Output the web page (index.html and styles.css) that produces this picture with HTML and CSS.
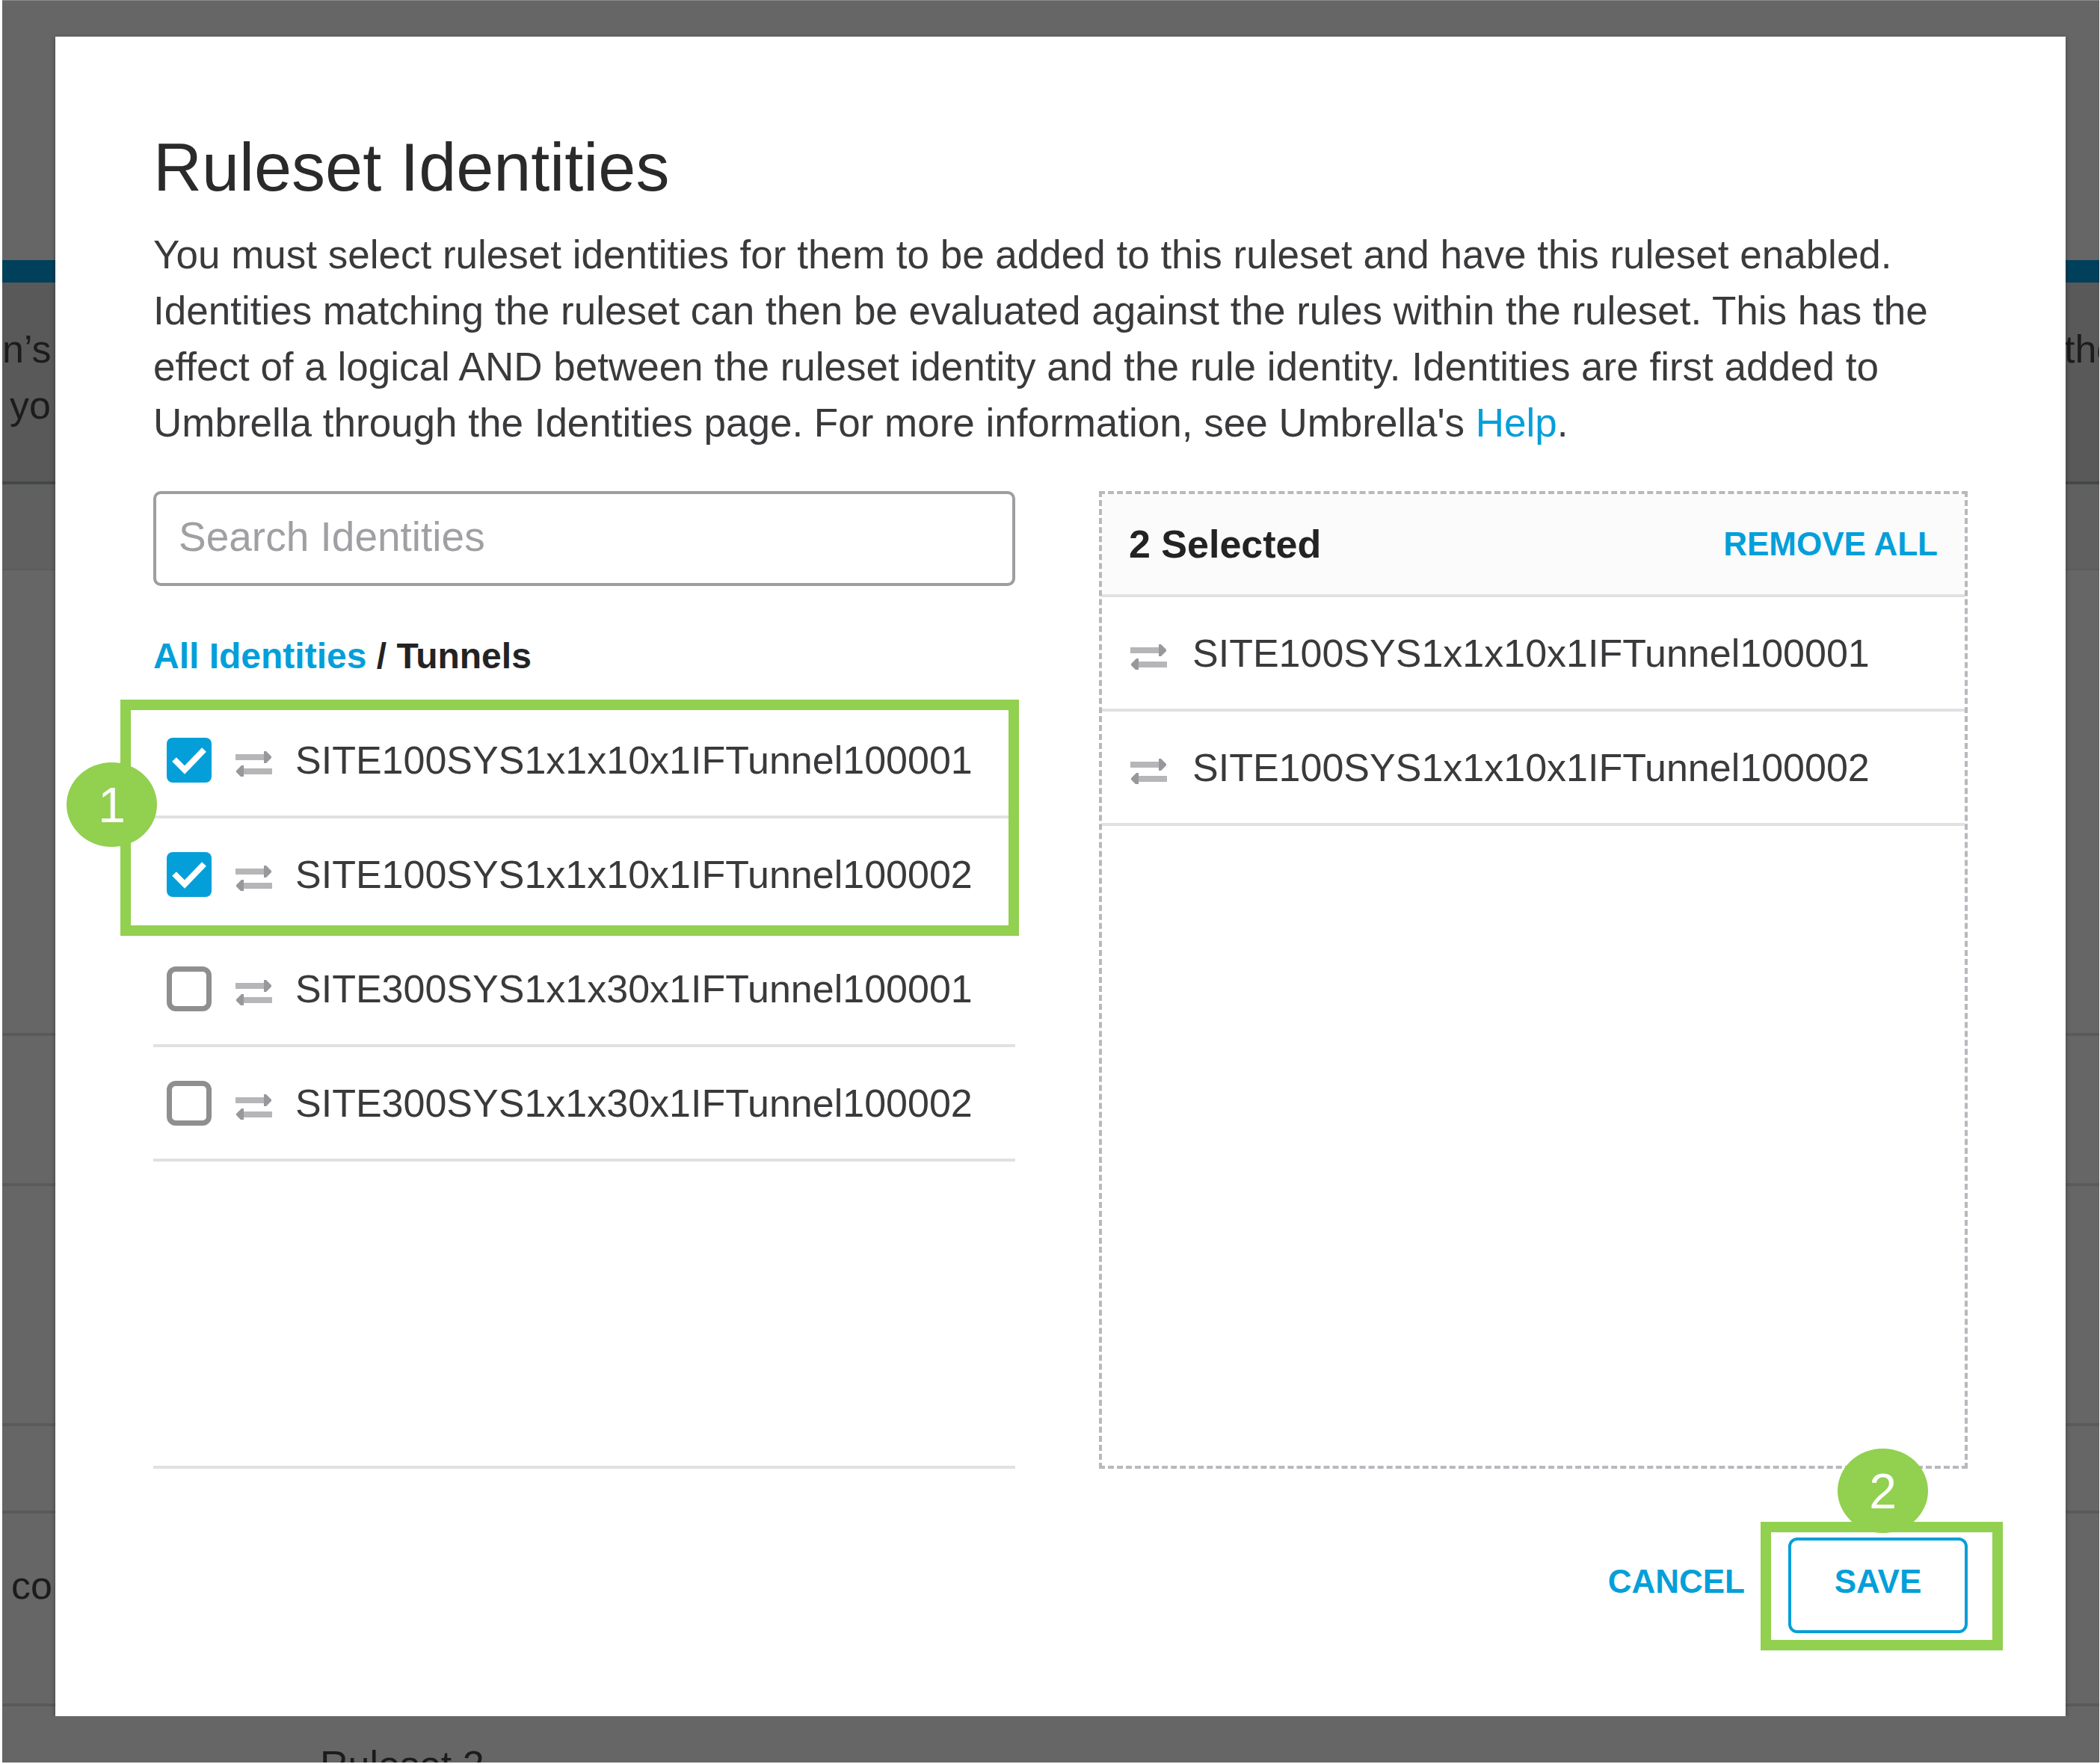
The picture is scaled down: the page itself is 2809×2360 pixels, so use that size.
FILE: index.html
```html
<!DOCTYPE html>
<html lang="en">
<head>
<meta charset="utf-8">
<title>Ruleset Identities</title>
<link rel="stylesheet" href="styles.css">
</head>
<body>
<svg class="sprite" aria-hidden="true">
  <symbol id="tunnel" viewBox="0 0 50 44">
    <path fill="#b6b6b8" d="M1 14h39v8H1zM10 33h40v8H10z"/>
    <path fill="#98989c" d="M39 10h3l7 7v2l-7 7h-3zM12 29H9l-7 7v2l7 7h3z"/>
  </symbol>
</svg>

<div class="page">
  <div class="page-top"></div>
  <div class="notice">
    <div class="notice-line"><span>n’s</span><span class="notice-end">the</span></div>
    <div class="notice-line notice-indent">yo</div>
  </div>
  <div class="strip"></div>
  <div class="band band-tall"></div>
  <div class="band band-mid"></div>
  <div class="band band-open"></div>
  <div class="band band-short"></div>
  <div class="band band-text">co</div>
  <div class="band-last">Ruleset 2</div>
</div>

<main class="modal" role="dialog" aria-labelledby="title">
  <h1 id="title" class="title">Ruleset Identities</h1>
  <p class="intro">You must select ruleset identities for them to be added to this ruleset and have this ruleset enabled. Identities matching the ruleset can then be evaluated against the rules within the ruleset. This has the effect of a logical AND between the ruleset identity and the rule identity. Identities are first added to Umbrella through the Identities page. For more information, see Umbrella's <a class="link" href="#help">Help</a>.</p>

  <div class="columns">
    <section class="picker">
      <input class="search" type="text" placeholder="Search Identities" aria-label="Search Identities">
      <nav class="crumbs"><a class="link" href="#all">All Identities</a> / Tunnels</nav>
      <div class="list">
        <div class="marked">
          <label class="row"><input class="check" type="checkbox" checked><svg class="icon"><use href="#tunnel"/></svg><span>SITE100SYS1x1x10x1IFTunnel100001</span></label>
          <label class="row"><input class="check" type="checkbox" checked><svg class="icon"><use href="#tunnel"/></svg><span>SITE100SYS1x1x10x1IFTunnel100002</span></label>
          <div class="frame frame-list"></div>
          <div class="badge badge-list">1</div>
        </div>
        <label class="row"><input class="check" type="checkbox"><svg class="icon"><use href="#tunnel"/></svg><span>SITE300SYS1x1x30x1IFTunnel100001</span></label>
        <label class="row"><input class="check" type="checkbox"><svg class="icon"><use href="#tunnel"/></svg><span>SITE300SYS1x1x30x1IFTunnel100002</span></label>
      </div>
    </section>

    <section class="selected">
      <header class="selected-head">
        <h2 class="count">2 Selected</h2>
        <button class="action" type="button">REMOVE ALL</button>
      </header>
      <div class="row chosen"><svg class="icon"><use href="#tunnel"/></svg><span>SITE100SYS1x1x10x1IFTunnel100001</span></div>
      <div class="row chosen"><svg class="icon"><use href="#tunnel"/></svg><span>SITE100SYS1x1x10x1IFTunnel100002</span></div>
    </section>
  </div>

  <footer class="footer">
    <button class="action cancel" type="button">CANCEL</button>
    <div class="save-wrap">
      <button class="action save" type="button">SAVE</button>
      <div class="frame frame-save"></div>
      <div class="badge badge-save">2</div>
    </div>
  </footer>
</main>
</body>
</html>
```

FILE: styles.css
```css
:root {
  --blue: #049fd9;
  --green: #92d050;
  --rule: #e1e1e2;
  --ink: #3a3a3c;
}

* {
  box-sizing: border-box;
}

body {
  margin: 0;
  background: #fff;
  color: var(--ink);
  font-family: "Liberation Sans", Arial, sans-serif;
  font-size: 52px;
}

.sprite {
  position: absolute;
  width: 0;
  height: 0;
}

/* Dimmed page behind the dialog */
.page {
  position: absolute;
  inset: 0 1px 2px 3px;
  display: flex;
  flex-direction: column;
  overflow: hidden;
  border-top: 1px solid #8c8c8c;
  background: #666;
  color: #1c1c1c;
}

.page > * {
  flex-shrink: 0;
}

.page-top {
  height: 347px;
}

.notice {
  height: 300px;
  padding-top: 52px;
  border-top: 30px solid #00405a;
  border-bottom: 4px solid #444848;
  background: #595959;
  line-height: 75px;
}

.notice-line {
  display: flex;
  justify-content: space-between;
}

.notice-end {
  width: 47px;
}

.notice-indent {
  padding-left: 10px;
}

.strip {
  height: 115px;
  border-bottom: 2px solid #5c5c5c;
  background: #606060;
}

.band {
  border-bottom: 4px solid #5a5a5a;
}

.band-tall {
  height: 623px;
}

.band-mid {
  height: 201px;
}

.band-open {
  height: 321px;
}

.band-short {
  height: 117px;
}

.band-text {
  height: 258px;
  padding: 59px 12px;
  line-height: 75px;
}

.band-last {
  padding: 41px 425px;
  line-height: 75px;
  white-space: nowrap;
}

/* Dialog */
.modal {
  position: relative;
  margin: 49px 46px 0 74px;
  padding: 125px 131px 111px;
  background: #fff;
  box-shadow: 0 2px 6px rgba(0, 0, 0, 0.35);
}

.title {
  margin: 0 0 29px;
  color: #2a2a2b;
  font-size: 90px;
  font-weight: 400;
  line-height: 100px;
}

.intro {
  margin: 0 0 54px;
  font-size: 53px;
  line-height: 75px;
}

.link {
  color: var(--blue);
  text-decoration: none;
}

.columns {
  display: grid;
  grid-template-columns: 1153fr 1162fr;
  column-gap: 112px;
  min-height: 1308px;
}

.picker {
  display: flex;
  flex-direction: column;
}

.search {
  width: 100%;
  height: 127px;
  padding: 0 30px 6px;
  border: 4px solid #9e9ea2;
  border-radius: 10px;
  background: #fff;
  color: var(--ink);
  font: inherit;
  font-size: 55px;
}

.search::placeholder {
  color: #a0a0a4;
  opacity: 1;
}

.crumbs {
  margin: 64px 0 34px;
  color: #232324;
  font-size: 48px;
  font-weight: 700;
  line-height: 60px;
}

.list {
  flex: 1;
  border-bottom: 4px solid var(--rule);
}

.row {
  display: flex;
  align-items: center;
  gap: 31px;
  height: 153px;
  padding-left: 18px;
  border-bottom: 4px solid var(--rule);
}

.icon {
  flex: none;
  width: 50px;
  height: 44px;
  overflow: visible;
}

.check {
  flex: none;
  appearance: none;
  width: 60px;
  height: 60px;
  margin: 0;
  border: 7px solid #8f8f90;
  border-radius: 12px;
  background: #fff;
}

.check:checked {
  border: 0;
  border-radius: 8px;
  background: var(--blue) url("data:image/svg+xml,%3Csvg xmlns='http://www.w3.org/2000/svg' viewBox='0 0 60 60'%3E%3Cpath d='M10 29l14 14L50 16' fill='none' stroke='white' stroke-width='8'/%3E%3C/svg%3E") center / 60px 60px;
}

.selected {
  border: 4px dashed #b8b8be;
}

.selected-head {
  display: flex;
  align-items: center;
  justify-content: space-between;
  height: 138px;
  padding: 0 36px;
  border-bottom: 4px solid var(--rule);
  background: #fbfbfb;
}

.count {
  margin: 0;
  color: #232324;
  font-size: 52px;
  font-weight: 700;
}

.action {
  padding: 0;
  border: 0;
  background: none;
  color: var(--blue);
  font: inherit;
  font-size: 44px;
  font-weight: 700;
}

.chosen {
  gap: 34px;
  padding-left: 37px;
}

.footer {
  display: flex;
  justify-content: flex-end;
  gap: 58px;
  margin-top: 92px;
}

.cancel {
  padding-bottom: 10px;
}

.save-wrap {
  position: relative;
}

.save {
  width: 240px;
  height: 128px;
  padding-bottom: 10px;
  border: 4px solid var(--blue);
  border-radius: 12px;
}

/* Numbered step callouts */
.marked {
  position: relative;
}

.frame {
  position: absolute;
  border: 14px solid var(--green);
  pointer-events: none;
}

.frame-list {
  inset: -6px -5px -4px -44px;
}

.frame-save {
  inset: -21px -47px -23px -37px;
}

.badge {
  position: absolute;
  display: grid;
  place-items: center;
  width: 121px;
  height: 113px;
  border-radius: 50%;
  background: var(--green);
  color: #fff;
  font-size: 66px;
}

.badge-list {
  top: 78px;
  left: -116px;
}

.badge-save {
  top: -119px;
  left: 66px;
}
```
